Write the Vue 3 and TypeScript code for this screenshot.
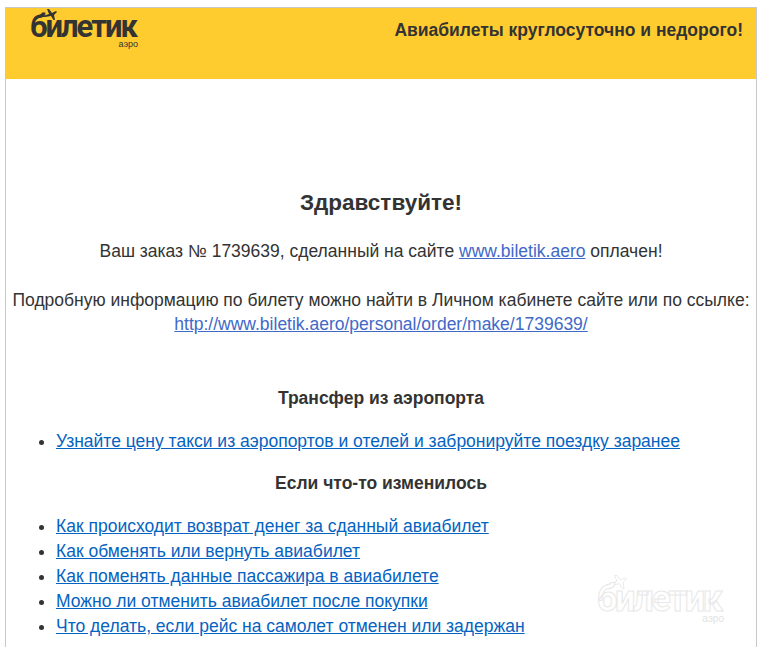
<script setup lang="ts">
const transfer: string[] = ['Узнайте цену такси из аэропортов и отелей и забронируйте поездку заранее']
const changed: string[] = [
  'Как происходит возврат денег за сданный авиабилет',
  'Как обменять или вернуть авиабилет',
  'Как поменять данные пассажира в авиабилете',
  'Можно ли отменить авиабилет после покупки',
  'Что делать, если рейс на самолет отменен или задержан',
]
</script>

<template>
  <div class="page">
    <div class="mail">
      <header class="head">
        <div class="logo">
          <svg class="plane" viewBox="0 0 20 14" width="20" height="14"><path d="M1 9 C4 8 7 7 10 6 L8 1 L10 1 L13 5 L17 3 L18 4 L15 7 L16 12 L14.500 12 L12 8 C8 9 4 9 1 9 Z" fill="#333" /></svg>
          <span class="logo-word">билетик</span>
          <span class="logo-sub">аэро</span>
        </div>
        <div class="slogan">Авиабилеты круглосуточно и недорого!</div>
      </header>
      <main class="body">
        <h1 class="hello">Здравствуйте!</h1>
        <p class="line first">Ваш заказ № 1739639, сделанный на сайте <a class="soft" href="#">www.biletik.aero</a> оплачен!</p>
        <p class="line second">Подробную информацию по билету можно найти в Личном кабинете сайте или по ссылке:<br /><a class="soft" href="#">http://www.biletik.aero/personal/order/make/1739639/</a></p>
        <h2 class="sub top">Трансфер из аэропорта</h2>
        <ul class="links">
          <li v-for="t in transfer" :key="t"><a href="#">{{ t }}</a></li>
        </ul>
        <h2 class="sub">Если что-то изменилось</h2>
        <ul class="links">
          <li v-for="t in changed" :key="t"><a href="#">{{ t }}</a></li>
        </ul>
      </main>
      <div class="mark" aria-hidden="true">
        <svg class="mark-plane" viewBox="0 0 20 14" width="24" height="17"><path d="M1 9 C4 8 7 7 10 6 L8 1 L10 1 L13 5 L17 3 L18 4 L15 7 L16 12 L14.500 12 L12 8 C8 9 4 9 1 9 Z" fill="#fff" stroke="#e8e8e8" stroke-width="0.800" /></svg>
        <span class="mark-word">билетик</span>
        <span class="mark-sub">аэро</span>
      </div>
    </div>
  </div>
</template>

<style>
html, body { margin: 0; background: #fff; }
</style>

<style scoped>
.page {
  height: 647px;
  overflow: hidden;
  padding: 7px 6px 0 5px;
  box-sizing: border-box;
  font-family: "Liberation Sans", Arial, sans-serif;
  color: #333;
}
.mail {
  position: relative;
  border: 1px solid #c8c8c8;
  border-bottom: 0;
  height: 700px;
  box-sizing: border-box;
}
.head {
  height: 71px;
  background: #ffcc2f;
  display: flex;
  justify-content: space-between;
  align-items: flex-start;
}
.logo {
  position: relative;
  margin-left: 24px;
  width: 108px;
  height: 40px;
  color: #333;
}
.plane { position: absolute; left: 9px; top: 0; }
.logo-word {
  position: absolute;
  left: 0;
  top: 6px;
  font-family: Roboto, sans-serif;
  font-weight: 700;
  font-size: 31px;
  line-height: 26px;
  letter-spacing: -2px;
  white-space: nowrap;
}
.logo-sub {
  position: absolute;
  right: 0;
  top: 33px;
  font-size: 9px;
  line-height: 7px;
}
.slogan {
  margin: 12px 13px 0 0;
  font-size: 17.500px;
  font-weight: 700;
  line-height: 20px;
}
.body { text-align: center; padding-top: 108px; }
.hello {
  margin: 0;
  font-size: 22.500px;
  line-height: 32px;
  font-weight: 700;
}
.line {
  margin: 0;
  font-size: 17.500px;
  line-height: 24px;
}
.first { margin-top: 20px; }
.second { margin-top: 25px; }
.soft { color: #4169c8; }
.sub {
  margin: 0;
  font-size: 17.500px;
  line-height: 22px;
  font-weight: 700;
}
.top { margin-top: 51px; }
.links {
  margin: 20px 0 18px;
  padding: 0 0 0 50px;
  text-align: left;
  font-size: 17.500px;
  line-height: 25px;
}
.links a { color: #0563c1; }
.mark {
  position: absolute;
  left: 591px;
  top: 566px;
  width: 127px;
  height: 46px;
  pointer-events: none;
}
.mark-plane { position: absolute; left: 8px; top: 0; }
.mark-word {
  position: absolute;
  left: 0;
  top: 9px;
  font-family: Roboto, sans-serif;
  font-weight: 700;
  font-size: 36px;
  line-height: 32px;
  letter-spacing: -2.200px;
  white-space: nowrap;
  color: #fff;
  -webkit-text-stroke: 1px #e8e8e8;
}
.mark-sub {
  position: absolute;
  right: 0;
  top: 40px;
  font-size: 10px;
  line-height: 9px;
  color: #e2e2e2;
}
</style>
